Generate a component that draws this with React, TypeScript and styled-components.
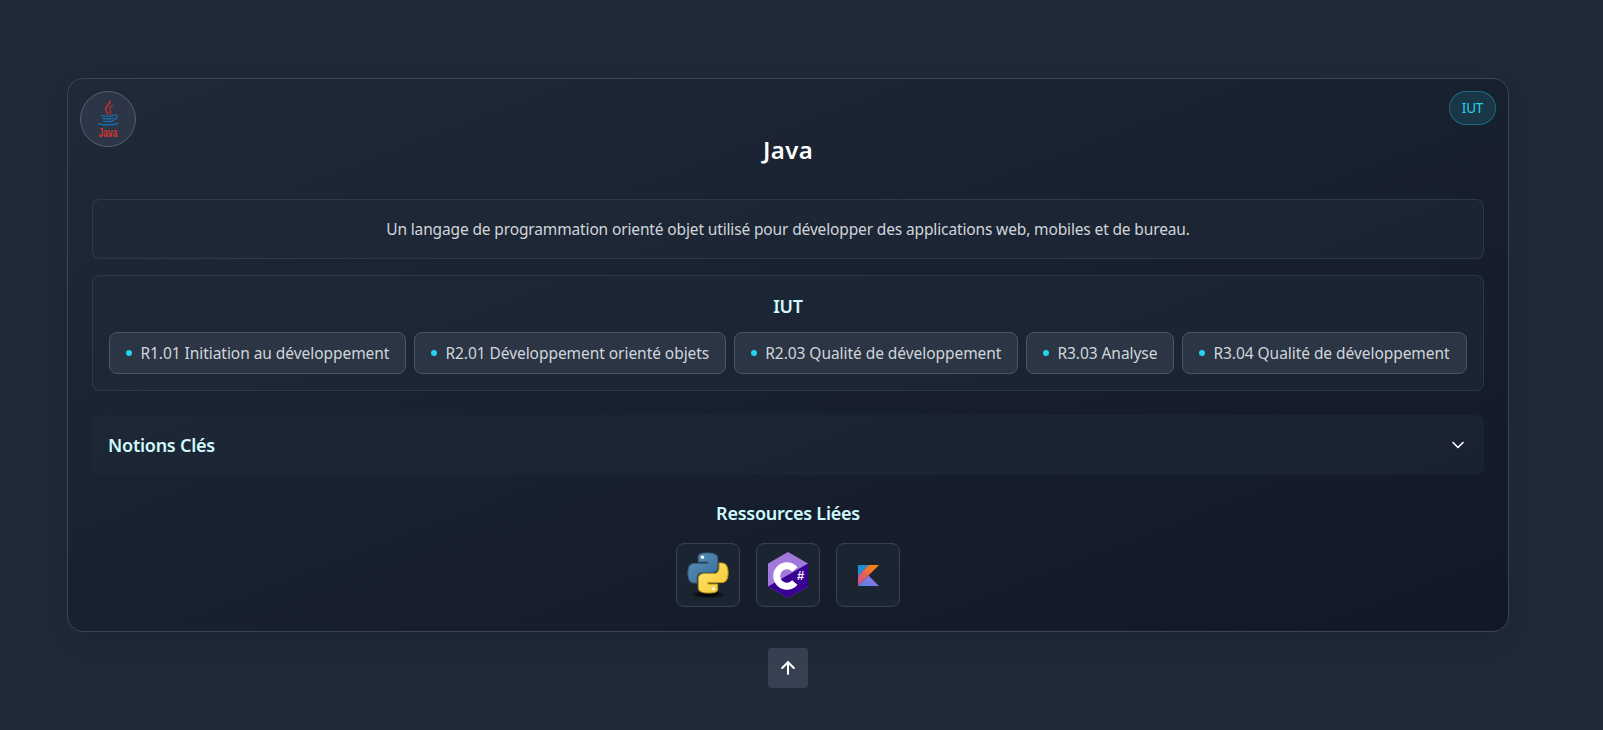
import React, { FC } from 'react';
import styled, { createGlobalStyle } from 'styled-components';
import { ArrowUp, ChevronDown } from 'lucide-react';

const GlobalStyle = createGlobalStyle`
  html, body {
    margin: 0;
    padding: 0;
    background-color: #1f2937;
    font-family: "Noto Sans", "Open Sans", sans-serif;
  }
`;

const Page = styled.main`
  box-sizing: border-box;
  display: flex;
  flex-direction: column;
  align-items: center;
  height: 730px;
  overflow: hidden;
  padding-top: 78px;
  width: 1576px;
`;

const Card = styled.section`
  background: linear-gradient(to bottom right, #1f2937, #111827);
  border: 1px solid #3b4453;
  border-radius: 16px;
  box-shadow: 0 10px 30px rgba(0, 0, 0, 0.08);
  box-sizing: border-box;
  padding: 24px;
  position: relative;
  width: 1442px;
`;

const Avatar = styled.div`
  align-items: center;
  background-color: #2c3646;
  border: 1px solid #566071;
  border-radius: 50%;
  box-sizing: border-box;
  display: flex;
  height: 56px;
  justify-content: center;
  left: 12px;
  position: absolute;
  top: 12px;
  width: 56px;
`;

const Badge = styled.span`
  background-color: rgba(34, 211, 238, 0.12);
  border: 1px solid rgba(34, 211, 238, 0.35);
  border-radius: 999px;
  box-sizing: border-box;
  color: #22d3ee;
  font-size: 13.5px;
  height: 34px;
  letter-spacing: -0.2px;
  line-height: 32px;
  position: absolute;
  right: 12px;
  text-align: center;
  top: 12px;
  width: 47px;
`;

const Title = styled.h1`
  color: #ffffff;
  font-size: 24px;
  font-weight: 600;
  letter-spacing: 0.4px;
  line-height: 32px;
  margin: 31px 0 33px;
  text-align: center;
`;

const Panel = styled.div`
  background-color: rgba(31, 41, 55, 0.5);
  border: 1px solid rgba(75, 85, 99, 0.4);
  border-radius: 8px;
  margin-bottom: 16px;
  padding: 16px;
`;

const Description = styled.p`
  color: #d1d5db;
  font-size: 15.5px;
  letter-spacing: -0.14px;
  line-height: 26px;
  margin: 0;
  text-align: center;
`;

const SectionTitle = styled.h2<{ $gap: number }>`
  color: #cffafe;
  font-size: 18px;
  font-weight: 600;
  letter-spacing: -0.25px;
  line-height: 28px;
  margin: 0 0 ${({ $gap }) => $gap}px;
  text-align: center;
`;

const PillRow = styled.ul`
  display: flex;
  gap: 8px;
  justify-content: center;
  list-style: none;
  margin: 0;
  padding: 0;
`;

const Pill = styled.li`
  align-items: center;
  background-color: #2b3544;
  border: 1px solid #4b5563;
  border-radius: 8px;
  box-sizing: border-box;
  color: #d1d5db;
  display: flex;
  font-size: 15.5px;
  gap: 8px;
  height: 42px;
  letter-spacing: -0.05px;
  padding: 0 16px;
  white-space: nowrap;

  &::before {
    background-color: #22d3ee;
    border-radius: 50%;
    content: '';
    height: 6px;
    width: 6px;
  }
`;

const Accordion = styled.button`
  align-items: center;
  background-color: rgba(31, 41, 55, 0.5);
  border: 0;
  border-radius: 8px;
  color: #ffffff;
  display: flex;
  font-family: inherit;
  height: 60px;
  justify-content: space-between;
  margin: 24px 0;
  padding: 0 16px;
  width: 100%;
`;

const AccordionLabel = styled.span`
  color: #cffafe;
  font-size: 18px;
  font-weight: 600;
  letter-spacing: -0.25px;
`;

const ResourceRow = styled.div`
  display: flex;
  gap: 16px;
  justify-content: center;
`;

const ResourceTile = styled.a`
  align-items: center;
  background-color: #1b2431;
  border: 1px solid #374151;
  border-radius: 8px;
  box-sizing: border-box;
  display: flex;
  height: 64px;
  justify-content: center;
  width: 64px;
`;

const TopButton = styled.button`
  align-items: center;
  background-color: #374151;
  border: 0;
  border-radius: 4px;
  color: #ffffff;
  display: flex;
  height: 40px;
  justify-content: center;
  margin-top: 16px;
  padding: 0;
  width: 40px;
`;

const JavaLogo: FC = () => (
  <svg width="40" height="44" viewBox="0 0 40 44">
    <g fill="none" stroke="#c8312f" strokeLinecap="round">
      <path d="M22 4 C23 7 16 9 18 13 C18.6 14.4 19.6 15.5 19.8 17" strokeWidth="1.6" />
      <path d="M24.5 8.5 C21.5 10 21 11.5 22.5 13.5 C23.4 15 22.8 16 22 17" strokeWidth="1.2" />
    </g>
    <g fill="none" stroke="#1b6fb3" strokeLinecap="round">
      <path d="M13.5 18.5 C16 19.6 22 19.6 26 18.2" strokeWidth="1.3" />
      <path d="M15 21.3 C18 22.1 22 22.1 25 21.1" strokeWidth="1.2" />
      <path d="M15 24 C18 24.8 22 24.8 25 23.9" strokeWidth="1.2" />
      <path d="M26.5 18.2 C30 17 30 21.5 25.5 23" strokeWidth="1.1" />
      <path d="M10.5 26.6 C15 28.4 25 28.4 30 26.4" strokeWidth="1.4" />
    </g>
    <text x="20" y="40" fill="#d03532" fontFamily="Liberation Sans, sans-serif" fontSize="13" fontWeight="700" textAnchor="middle" textLength="19" lengthAdjust="spacingAndGlyphs">Java</text>
  </svg>
);

const PythonLogo: FC = () => (
  <svg width="48" height="48" viewBox="0 0 48 48">
    <defs>
      <linearGradient id="pyBlue" x1="0" y1="0" x2="1" y2="1">
        <stop offset="0" stopColor="#5a94bd" />
        <stop offset="1" stopColor="#366a96" />
      </linearGradient>
      <linearGradient id="pyYellow" x1="0" y1="0" x2="1" y2="1">
        <stop offset="0" stopColor="#ffe873" />
        <stop offset="1" stopColor="#f5c52c" />
      </linearGradient>
      <radialGradient id="pyShadow">
        <stop offset="0" stopColor="#000" stopOpacity="1" />
        <stop offset="0.5" stopColor="#000" stopOpacity="0.7" />
        <stop offset="1" stopColor="#000" stopOpacity="0" />
      </radialGradient>
    </defs>
    <ellipse cx="24" cy="43.5" rx="18" ry="4" fill="url(#pyShadow)" />
    <g transform="translate(4 2) scale(1.667)">
      <path fill="url(#pyBlue)" stroke="#35607f" strokeWidth="0.6" d="M14.25.18l.9.2.73.26.59.3.45.32.34.34.25.34.16.33.1.3.04.26.02.2-.01.13V8.5l-.05.63-.13.55-.21.46-.26.38-.3.31-.33.25-.35.19-.35.14-.33.1-.3.07-.26.04-.21.02H8.77l-.69.05-.59.14-.5.22-.41.27-.33.32-.27.35-.2.36-.15.37-.1.35-.07.32-.04.27-.02.21v3.06H3.17l-.21-.03-.28-.07-.32-.12-.35-.18-.36-.26-.36-.36-.35-.46-.32-.59-.28-.73-.21-.88-.14-1.05-.05-1.23.06-1.22.16-1.04.24-.87.32-.71.36-.57.4-.44.42-.33.42-.24.4-.16.36-.1.32-.05.24-.01h.16l.06.01h8.16v-.83H6.18l-.01-2.75-.02-.37.05-.34.11-.31.17-.28.25-.26.31-.23.38-.2.44-.18.51-.15.58-.12.64-.1.71-.06.77-.04.84-.02 1.27.05z" />
      <circle cx="8.67" cy="2.57" r="1" fill="#ffffff" />
      <path fill="url(#pyYellow)" stroke="#b8931f" strokeWidth="0.6" d="M21.04 6.11l.28.06.32.12.35.18.36.27.36.35.35.47.32.59.28.73.21.88.14 1.04.05 1.23-.06 1.23-.16 1.04-.24.86-.32.71-.36.57-.4.45-.42.33-.42.24-.4.16-.36.09-.32.05-.24.02-.16-.01h-8.22v.82h5.84l.01 2.76.02.36-.05.34-.11.31-.17.29-.25.25-.31.24-.38.2-.44.17-.51.15-.58.13-.64.09-.71.07-.77.04-.84.01-1.27-.04-1.07-.14-.9-.2-.73-.25-.59-.3-.45-.33-.34-.34-.25-.34-.16-.33-.1-.3-.04-.25-.02-.2.01-.13v-5.34l.05-.64.13-.54.21-.46.26-.38.3-.32.33-.24.35-.2.35-.14.33-.1.3-.06.26-.04.21-.02.13-.01h5.84l.69-.05.59-.14.5-.21.41-.28.33-.32.27-.35.2-.36.15-.36.1-.35.07-.32.04-.28.02-.21V6.07h2.09l.14.01z" />
      <circle cx="15.3" cy="21.4" r="1" fill="#ffffff" />
    </g>
  </svg>
);

const CSharpLogo: FC = () => (
  <svg width="48" height="48" viewBox="0 0 48 48">
    <polygon points="24,1 44,12.5 44,35.5 24,47 4,35.5 4,12.5" fill="#a179dc" />
    <polygon points="4,35.5 44,12.5 44,35.5 24,47" fill="#390091" />
    <path d="M30.8 18.5 A10.2 10.2 0 1 0 30.8 31.5" fill="none" stroke="#ffffff" strokeWidth="7" />
    <text x="36.7" y="28.5" fill="#ffffff" fontFamily="Liberation Sans, sans-serif" fontSize="13" fontWeight="700" textAnchor="middle">#</text>
  </svg>
);

const KotlinLogo: FC = () => (
  <svg width="21" height="21" viewBox="0 0 21 21">
    <defs>
      <linearGradient id="ktBand" x1="1" y1="0" x2="0" y2="1">
        <stop offset="0.15" stopColor="#f88909" />
        <stop offset="0.55" stopColor="#e4605a" />
        <stop offset="1" stopColor="#c74f9a" />
      </linearGradient>
      <linearGradient id="ktTop" x1="0" y1="0" x2="1" y2="1">
        <stop offset="0" stopColor="#0296d8" />
        <stop offset="1" stopColor="#4f86e6" />
      </linearGradient>
      <linearGradient id="ktBottom" x1="0" y1="1" x2="1" y2="0">
        <stop offset="0" stopColor="#4f86e6" />
        <stop offset="1" stopColor="#a56de2" />
      </linearGradient>
    </defs>
    <polygon points="0,21 10.5,10.5 21,21" fill="url(#ktBottom)" />
    <polygon points="0,0 10.5,0 0,11" fill="url(#ktTop)" />
    <polygon points="10.5,0 0,11 0,21 10.5,10.5 21,0" fill="url(#ktBand)" />
  </svg>
);

const courses = [
  'R1.01 Initiation au développement',
  'R2.01 Développement orienté objets',
  'R2.03 Qualité de développement',
  'R3.03 Analyse',
  'R3.04 Qualité de développement',
];

const App: FC = () => (
  <Page>
    <GlobalStyle />
    <Card>
      <Avatar><JavaLogo /></Avatar>
      <Badge>IUT</Badge>
      <Title>Java</Title>
      <Panel>
        <Description>
          Un langage de programmation orienté objet utilisé pour développer des applications web, mobiles et de bureau.
        </Description>
      </Panel>
      <Panel>
        <SectionTitle $gap={12}>IUT</SectionTitle>
        <PillRow>
          {courses.map((course) => <Pill key={course}>{course}</Pill>)}
        </PillRow>
      </Panel>
      <Accordion>
        <AccordionLabel>Notions Clés</AccordionLabel>
        <ChevronDown size={20} />
      </Accordion>
      <SectionTitle $gap={16}>Ressources Liées</SectionTitle>
      <ResourceRow>
        <ResourceTile><PythonLogo /></ResourceTile>
        <ResourceTile><CSharpLogo /></ResourceTile>
        <ResourceTile><KotlinLogo /></ResourceTile>
      </ResourceRow>
    </Card>
    <TopButton><ArrowUp size={20} strokeWidth={2.5} /></TopButton>
  </Page>
);

export default App;
